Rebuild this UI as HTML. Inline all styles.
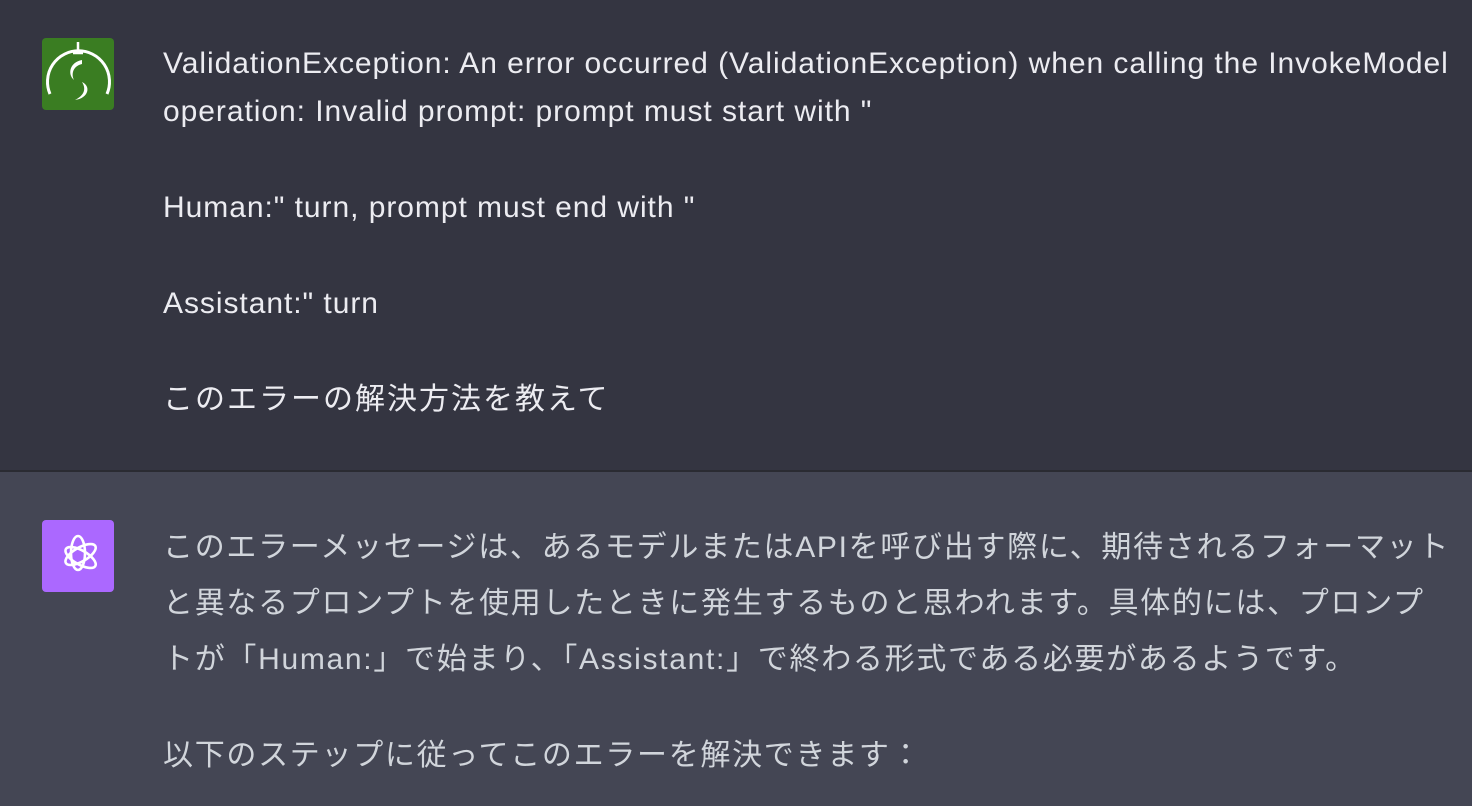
<!DOCTYPE html>
<html><head><meta charset="utf-8"><style>
html,body{margin:0;padding:0;width:1472px;height:806px;overflow:hidden;font-family:"Liberation Sans","Noto Sans CJK JP",sans-serif;}
.top{position:absolute;left:0;top:0;width:1472px;height:470px;background:#343541;border-bottom:2px solid #2a2b32;}
.bot{position:absolute;left:0;top:472px;width:1472px;height:334px;background:#444654;}
.av{position:absolute;left:42px;width:72px;height:72px;border-radius:4px;}
.t{position:absolute;left:163px;color:#ececf1;font-size:30px;letter-spacing:0.95px;white-space:nowrap;}
.t p{margin:0;}
</style></head><body>
<div class="top">
<div class="av" style="top:38px;background:#3a7d22;">
<svg width="72" height="72" viewBox="0 0 72 72">
<path d="M8 56 A31 31 0 1 1 65 56" fill="none" stroke="#fff" stroke-width="3"/>
<path d="M36 4 V15 M31 15 H41" stroke="#fff" stroke-width="2.5"/>
<path d="M40 22 C28 24 25 36 32 42 C29 36 31 28 40 26Z" fill="#fff"/>
<path d="M40 44 C49 48 47 60 33 62 C41 58 45 52 40 44Z" fill="#fff"/>
</svg></div>
<div class="t" style="top:40px;line-height:48px;">
<p>ValidationException: An error occurred (ValidationException) when calling the InvokeModel<br>operation: Invalid prompt: prompt must start with "</p>
<p style="margin-top:48px">Human:" turn, prompt must end with "</p>
<p style="margin-top:48px">Assistant:" turn</p>
<p style="margin-top:48px;letter-spacing:2px">このエラーの解決方法を教えて</p>
</div>
</div>
<div class="bot">
<div class="av" style="top:48px;background:#ab68ff;">
<svg width="72" height="72" viewBox="0 0 72 72" fill="none" stroke="#fff" stroke-width="2.6">
<g transform="translate(36,36)">
<ellipse rx="7" ry="17" transform="rotate(0) translate(0,-3)"/>
<ellipse rx="7" ry="17" transform="rotate(60) translate(0,-3)"/>
<ellipse rx="7" ry="17" transform="rotate(120) translate(0,-3)"/>
</g></svg></div>
<div class="t" style="top:48px;line-height:56px;color:#d1d5db;letter-spacing:1.7px;">
<p>このエラーメッセージは、あるモデルまたはAPIを呼び出す際に、期待されるフォーマット<br>と異なるプロンプトを使用したときに発生するものと思われます。具体的には、プロンプ<br>トが「Human:」で始まり、「Assistant:」で終わる形式である必要があるようです。</p>
<p style="margin-top:40px">以下のステップに従ってこのエラーを解決できます：</p>
</div>
</div>
</body></html>
